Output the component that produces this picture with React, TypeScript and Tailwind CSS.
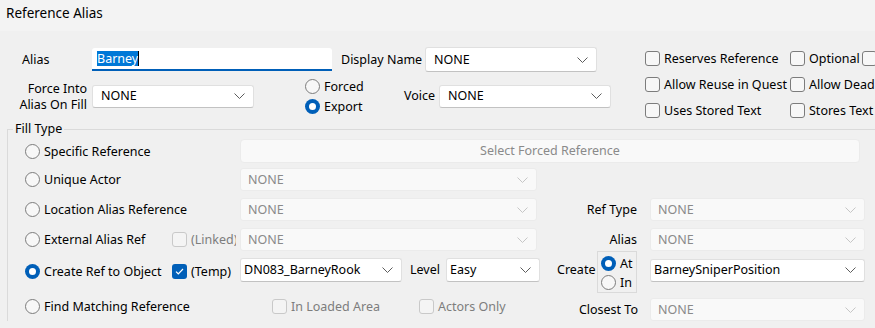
import clsx from "clsx";

function Chevron({ disabled }: { disabled?: boolean }) {
  return (
    <svg width="11" height="6" viewBox="0 0 11 6" className={disabled ? "text-[#c6c6c6]" : "text-[#5c5c5c]"}>
      <path d="M0.5 0.5L5.5 5.5L10.5 0.5" fill="none" stroke="currentColor" strokeWidth="1" />
    </svg>
  );
}

interface SelectProps {
  value: string;
  className: string;
  disabled?: boolean;
  tight?: boolean;
}

function Select({ value, className, disabled, tight }: SelectProps) {
  return (
    <div
      className={clsx(
        "flex items-center justify-between pr-[8px] rounded-[3px] border shrink-0",
        disabled
          ? "bg-[#f9f9f9] border-[#ebebeb] text-[#8a8a8a] pl-[7px]"
          : "bg-white border-[#e0e0e0] border-b-[#c2c2c2] text-black",
        !disabled && (tight ? "pl-[3px]" : "pl-[8px]"),
        className
      )}
    >
      <span>{value}</span>
      <Chevron disabled={disabled} />
    </div>
  );
}

function RadioDot({ checked }: { checked?: boolean }) {
  return checked ? (
    <span className="w-[15px] h-[15px] rounded-full bg-[#005fb8] flex items-center justify-center shrink-0">
      <span className="w-[7px] h-[7px] rounded-full bg-white" />
    </span>
  ) : (
    <span className="w-[15px] h-[15px] rounded-full border border-[#7c7c7c] bg-[#f7f7f7] shrink-0" />
  );
}

function Radio({ label, checked }: { label: string; checked?: boolean }) {
  return (
    <div className="flex items-center gap-[4px] whitespace-nowrap">
      <RadioDot checked={checked} />
      <span className="pt-[1px]">{label}</span>
    </div>
  );
}

function Box({ checked, disabled }: { checked?: boolean; disabled?: boolean }) {
  return checked ? (
    <span className="w-[15px] h-[15px] rounded-[3px] bg-[#005fb8] flex items-center justify-center shrink-0">
      <svg width="9" height="7" viewBox="0 0 9 7">
        <path d="M1 3.6L3.3 5.8L8 1" fill="none" stroke="white" strokeWidth="1.2" />
      </svg>
    </span>
  ) : (
    <span
      className={clsx(
        "w-[15px] h-[15px] rounded-[3px] border shrink-0",
        disabled ? "border-[#c9c9c9] bg-[#f4f4f4]" : "border-[#7c7c7c] bg-[#f7f7f7]"
      )}
    />
  );
}

function Check({ label, checked, disabled }: { label: string; checked?: boolean; disabled?: boolean }) {
  return (
    <div className="flex items-center gap-[4px] whitespace-nowrap">
      <Box checked={checked} disabled={disabled} />
      <span className={clsx("pt-[1px]", disabled ? "text-[#7d7d7d]" : "text-black")}>{label}</span>
    </div>
  );
}

export default function App() {
  return (
    <div className="w-[875px] h-[328px] overflow-hidden bg-[#f0f0f0] text-black text-[12.5px] leading-[16px] font-['Noto_Sans',sans-serif]">
      {/* Title */}
      <div className="h-[31px] bg-[#f3f3f3] pl-[6px] pt-[4px] text-[13.5px] leading-[18px]">Reference Alias</div>

      {/* Top section */}
      <div className="flex h-[90px]">
        <div className="w-[645px] shrink-0 pt-[16px]">
          <div className="flex items-center h-[25px]">
            <span className="w-[92px] pl-[22px] shrink-0">Alias</span>
            <div className="w-[240px] h-[23px] bg-white rounded-t-[3px] border-b-2 border-[#005fb8] flex items-center pl-[5px] shrink-0">
              <span className="bg-[#0078d7] text-white leading-[15px]">Barney</span>
              <span className="w-px h-[15px] bg-black" />
            </div>
            <span className="w-[84px] ml-[9px] shrink-0">Display Name</span>
            <Select value="NONE" className="w-[172px] h-[25px]" />
          </div>
          <div className="flex items-center h-[36px] mt-[6px]">
            <div className="w-[87px] text-right leading-[16px] pt-[1px] shrink-0">
              Force Into
              <br />
              Alias On Fill
            </div>
            <Select value="NONE" className="ml-[5px] w-[162px] h-[23px]" />
            <div className="ml-[51px] w-[99px] flex flex-col shrink-0">
              <div className="h-[20px] flex items-center">
                <Radio label="Forced" />
              </div>
              <div className="h-[20px] flex items-center">
                <Radio label="Export" checked />
              </div>
            </div>
            <span className="w-[35px] shrink-0">Voice</span>
            <Select value="NONE" className="w-[172px] h-[23px]" />
          </div>
        </div>

        <div className="pt-[14px] grid grid-cols-[145px_72px_40px] auto-rows-[26px] items-center">
          <Check label="Reserves Reference" />
          <Check label="Optional" />
          <Box />
          <Check label="Allow Reuse in Quest" />
          <Check label="Allow Dead" />
          <span />
          <Check label="Uses Stored Text" />
          <Check label="Stores Text" />
          <span />
        </div>
      </div>

      {/* Fill type */}
      <fieldset className="ml-[7px] w-[880px] border-t border-l border-[#dadada]">
        <legend className="ml-[5px] px-[2px] leading-[16px]">Fill Type</legend>
        <div className="pl-[17px]">
          <div className="flex items-center h-[24px] mt-[2px]">
            <div className="w-[147px] shrink-0">
              <Radio label="Specific Reference" />
            </div>
            <div className="w-[68px] shrink-0" />
            <div className="w-[620px] h-[24px] bg-[#f9f9f9] border border-[#ebebeb] rounded-[4px] flex items-center justify-center text-[#8a8a8a] shrink-0">
              Select Forced Reference
            </div>
          </div>

          <div className="flex items-center h-[23px] mt-[5px]">
            <div className="w-[147px] shrink-0">
              <Radio label="Unique Actor" />
            </div>
            <div className="w-[68px] shrink-0" />
            <Select value="NONE" disabled className="w-[297px] h-[23px]" />
          </div>

          <div className="flex items-center h-[23px] mt-[7px]">
            <div className="w-[147px] shrink-0">
              <Radio label="Location Alias Reference" />
            </div>
            <div className="w-[68px] shrink-0" />
            <Select value="NONE" disabled className="w-[297px] h-[23px]" />
            <span className="w-[100px] text-right shrink-0">Ref Type</span>
            <Select value="NONE" disabled className="ml-[13px] w-[215px] h-[23px]" />
          </div>

          <div className="flex items-center h-[23px] mt-[7px]">
            <div className="w-[147px] shrink-0">
              <Radio label="External Alias Ref" />
            </div>
            <div className="w-[64px] mr-[4px] overflow-hidden shrink-0">
              <Check label="(Linked)" disabled />
            </div>
            <Select value="NONE" disabled className="w-[297px] h-[23px]" />
            <span className="w-[100px] text-right shrink-0">Alias</span>
            <Select value="NONE" disabled className="ml-[13px] w-[215px] h-[23px]" />
          </div>

          <div className="flex items-center h-[38px]">
            <div className="w-[147px] pt-[2px] shrink-0">
              <Radio label="Create Ref to Object" checked />
            </div>
            <div className="w-[64px] mr-[4px] pt-[2px] overflow-hidden shrink-0">
              <Check label="(Temp)" checked />
            </div>
            <Select value="DN083_BarneyRook" tight className="w-[162px] h-[24px]" />
            <span className="ml-[8px] w-[36px] shrink-0">Level</span>
            <Select value="Easy" tight className="w-[94px] h-[24px]" />
            <span className="ml-[17px] w-[40px] shrink-0">Create</span>
            <div className="self-start w-[40px] h-[42px] border border-[#dadada] pl-[3px] pt-[2px] flex flex-col shrink-0">
              <div className="h-[20px] flex items-center">
                <Radio label="At" checked />
              </div>
              <div className="h-[19px] flex items-center">
                <Radio label="In" />
              </div>
            </div>
            <Select value="BarneySniperPosition" tight className="ml-[13px] w-[215px] h-[23px]" />
          </div>

          <div className="flex items-start h-[23px] mt-[9px]">
            <div className="w-[147px] h-[17px] flex items-center shrink-0">
              <Radio label="Find Matching Reference" />
            </div>
            <div className="w-[68px] shrink-0" />
            <div className="w-[297px] h-[17px] pl-[32px] flex items-center shrink-0">
              <div className="w-[147px] shrink-0">
                <Check label="In Loaded Area" disabled />
              </div>
              <Check label="Actors Only" disabled />
            </div>
            <span className="w-[101px] h-[23px] flex items-center justify-end shrink-0">Closest To</span>
            <Select value="NONE" disabled className="ml-[12px] w-[215px] h-[23px]" />
          </div>
        </div>
      </fieldset>
    </div>
  );
}
